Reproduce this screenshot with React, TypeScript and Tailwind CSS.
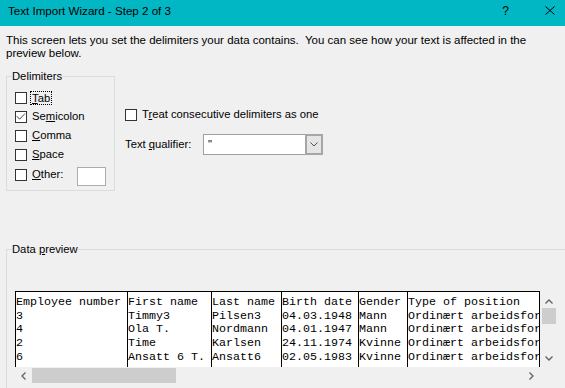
import React from "react";

function Box({ checked }: { checked?: boolean }) {
  return (
    <span className="w-[12px] h-[12px] border border-[#333333] bg-white shrink-0 flex items-center justify-center">
      {checked && (
        <svg width="10" height="10" viewBox="0 0 10 10">
          <polyline points="0.8,4.2 3.6,7.2 9,1.6" fill="none" stroke="#444444" strokeWidth="1" />
        </svg>
      )}
    </span>
  );
}

function Chevron({ dir }: { dir: "up" | "down" | "left" | "right" }) {
  if (dir === "up")
    return (
      <svg width="8" height="5" viewBox="0 0 8 5">
        <polyline points="0.5,4.5 4,1 7.5,4.5" fill="none" stroke="#606060" strokeWidth="1.3" />
      </svg>
    );
  if (dir === "down")
    return (
      <svg width="8" height="5" viewBox="0 0 8 5">
        <polyline points="0.5,0.5 4,4 7.5,0.5" fill="none" stroke="#606060" strokeWidth="1.3" />
      </svg>
    );
  if (dir === "left")
    return (
      <svg width="5" height="8" viewBox="0 0 5 8">
        <polyline points="4.5,0.5 1,4 4.5,7.5" fill="none" stroke="#606060" strokeWidth="1.3" />
      </svg>
    );
  return (
    <svg width="5" height="8" viewBox="0 0 5 8">
      <polyline points="0.5,0.5 4,4 0.5,7.5" fill="none" stroke="#606060" strokeWidth="1.3" />
    </svg>
  );
}

const columns: { w: string; lines: string[] }[] = [
  { w: "w-[112px]", lines: ["Employee number", "3", "4", "2", "6"] },
  { w: "w-[84px]", lines: ["First name", "Timmy3", "Ola T.", "Time", "Ansatt 6 T."] },
  { w: "w-[70px]", lines: ["Last name", "Pilsen3", "Nordmann", "Karlsen", "Ansatt6"] },
  { w: "w-[77px]", lines: ["Birth date", "04.03.1948", "04.01.1947", "24.11.1974", "02.05.1983"] },
  { w: "w-[49px]", lines: ["Gender", "Mann", "Mann", "Kvinne", "Kvinne"] },
  {
    w: "w-[133px] border-r",
    lines: [
      "Type of position",
      "Ordinært arbeidsfor",
      "Ordinært arbeidsfor",
      "Ordinært arbeidsfor",
      "Ordinært arbeidsfor",
    ],
  },
];

export default function App() {
  return (
    <div className="w-[565px] h-[388px] overflow-hidden bg-[#f0f0f0] text-black font-['Liberation_Sans',Arial,sans-serif]">
      {/* Title bar */}
      <div className="h-[26px] bg-[#00b7c3] flex items-start pt-[4px] pl-[8px] pr-[10px] text-[11.6px] leading-[14px]">
        <span>Text Import Wizard - Step 2 of 3</span>
        <span className="ml-auto text-[12px]">?</span>
        <svg className="ml-[36px] mt-[2px]" width="10" height="9" viewBox="0 0 10 9">
          <line x1="0.5" y1="0.5" x2="9.5" y2="8.5" stroke="#000" strokeWidth="1" />
          <line x1="9.5" y1="0.5" x2="0.5" y2="8.5" stroke="#000" strokeWidth="1" />
        </svg>
      </div>

      {/* Description */}
      <div className="mt-[8px] pl-[6px] text-[11.5px] leading-[13px] whitespace-pre">
        <div>This screen lets you set the delimiters your data contains.  You can see how your text is affected in the</div>
        <div>preview below.</div>
      </div>

      {/* Middle section */}
      <div className="mt-[10px] flex items-start text-[11.25px] leading-[13px]">
        <fieldset className="ml-[6px] w-[109px] border border-[#dcdcdc] pl-[5px] pt-[5px] pb-[6px]">
          <legend className="leading-[13px]">Delimiters</legend>
          <div className="ml-[3px]">
            <div className="h-[19px] flex items-center">
              <Box />
              <span className="ml-[3px] px-[1px] border border-dotted border-black leading-[12px]">
                <u>T</u>ab
              </span>
            </div>
            <div className="h-[19px] flex items-center">
              <Box checked />
              <span className="ml-[5px]">
                Se<u>m</u>icolon
              </span>
            </div>
            <div className="h-[19px] flex items-center">
              <Box />
              <span className="ml-[5px]">
                <u>C</u>omma
              </span>
            </div>
            <div className="h-[19px] flex items-center">
              <Box />
              <span className="ml-[5px]">
                <u>S</u>pace
              </span>
            </div>
            <div className="h-[19px] mt-[1px] flex items-center">
              <Box />
              <span className="ml-[5px] w-[45px]">
                <u>O</u>ther:
              </span>
              <div className="self-start mt-[2px] w-[29px] h-[19px] bg-white border border-[#acacac]" />
            </div>
          </div>
        </fieldset>

        <div className="ml-[10px] pt-[35px]">
          <div className="h-[19px] flex items-center">
            <Box />
            <span className="ml-[5px]">
              T<u>r</u>eat consecutive delimiters as one
            </span>
          </div>
          <div className="mt-[10px] h-[21px] flex items-center">
            <span className="w-[78px]">
              Text <u>q</u>ualifier:
            </span>
            <div className="w-[120px] h-[21px] flex">
              <div className="flex-1 bg-white border-y border-l border-[#a0a0a0] pl-[4px] leading-[19px]">"</div>
              <div className="w-[18px] h-full bg-[#e5e5e5] border-2 border-[#a6a6a6] flex items-center justify-center">
                <svg width="8" height="5" viewBox="0 0 8 5">
                  <polyline points="0.5,0.5 4,4 7.5,0.5" fill="none" stroke="#505050" strokeWidth="1" />
                </svg>
              </div>
            </div>
          </div>
        </div>
      </div>

      {/* Data preview */}
      <fieldset className="mt-[52px] ml-[6px] w-[600px] border border-[#dcdcdc] pl-[5px] pt-[35px] pb-[20px] text-[11.25px] leading-[13px]">
        <legend className="leading-[13px]">
          Data <u>p</u>review
        </legend>
        <div className="ml-[3px] w-[542px]">
          <div className="flex h-[76px]">
            <div className="flex w-[525px] h-full border-t border-black bg-white font-['Liberation_Mono','Courier_New',monospace] text-[11.67px]">
              {columns.map((c, i) => (
                <div key={i} className={`${c.w} h-full border-l border-black overflow-hidden pt-[4px]`}>
                  {c.lines.map((l, j) => (
                    <div key={j} className="leading-[13.65px] whitespace-pre">
                      {l}
                    </div>
                  ))}
                </div>
              ))}
            </div>
            <div className="w-[17px] h-full flex flex-col">
              <div className="h-[17px] flex items-center justify-center pt-[4px]">
                <Chevron dir="up" />
              </div>
              <div className="ml-[2px] w-[14px] h-[16px] bg-[#cdcdcd]" />
              <div className="flex-1" />
              <div className="h-[17px] flex items-center justify-center">
                <Chevron dir="down" />
              </div>
            </div>
          </div>
          <div className="flex h-[17px] w-[525px] items-center">
            <div className="w-[17px] h-full flex items-center justify-center">
              <Chevron dir="left" />
            </div>
            <div className="w-[144px] h-[15px] bg-[#cdcdcd]" />
            <div className="flex-1" />
            <div className="w-[17px] h-full flex items-center justify-center">
              <Chevron dir="right" />
            </div>
          </div>
        </div>
      </fieldset>
    </div>
  );
}
